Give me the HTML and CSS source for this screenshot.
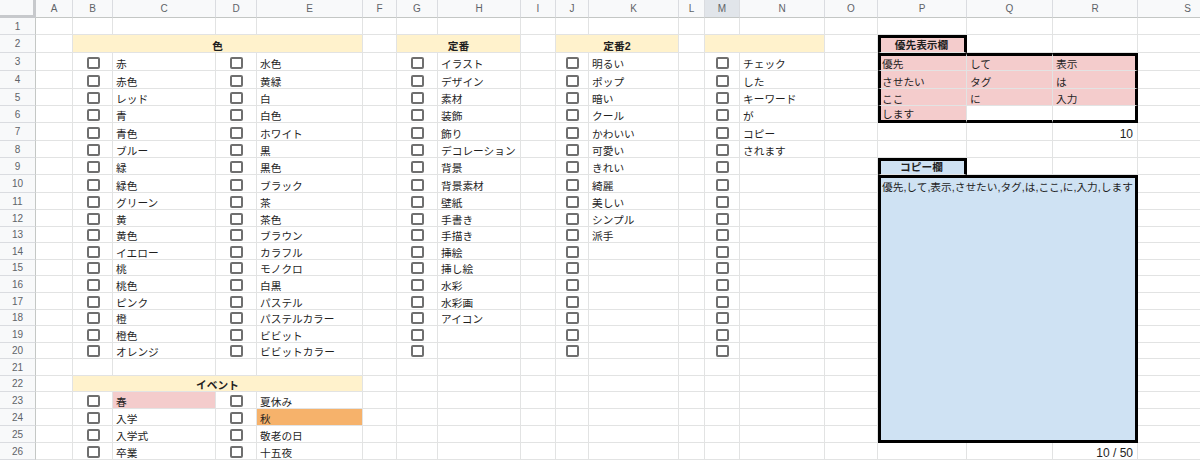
FILE: index.html
```html
<!DOCTYPE html>
<html lang="ja">
<head>
<meta charset="UTF-8">
<meta name="viewport" content="width=device-width, initial-scale=1.0">
<title>タグ選択シート</title>
<link rel="stylesheet" href="styles.css">
</head>
<body>

<div class="sheet" id="sheet"></div>

<script>
const COLS = 'ABCDEFGHIJKLMNOPQRS'.split('');
const cells = {};

function set(ref, opts) {
  const cell = cells[ref] || { cls: '' };
  if (opts.cls) cell.cls += ' ' + opts.cls;
  if (opts.text !== undefined) cell.text = opts.text;
  if (opts.cb) cell.cb = true;
  if (opts.span) cell.span = opts.span;
  cells[ref] = cell;
}

const colors = [['赤','水色'],['赤色','黄緑'],['レッド','白'],['青','白色'],['青色','ホワイト'],['ブルー','黒'],['緑','黒色'],['緑色','ブラック'],['グリーン','茶'],['黄','茶色'],['黄色','ブラウン'],['イエロー','カラフル'],['桃','モノクロ'],['桃色','白黒'],['ピンク','パステル'],['橙','パステルカラー'],['橙色','ビビット'],['オレンジ','ビビットカラー']];
const teiban = ['イラスト','デザイン','素材','装飾','飾り','デコレーション','背景','背景素材','壁紙','手書き','手描き','挿絵','挿し絵','水彩','水彩画','アイコン'];
const teiban2 = ['明るい','ポップ','暗い','クール','かわいい','可愛い','きれい','綺麗','美しい','シンプル','派手'];
const words = ['チェック','した','キーワード','が','コピー','されます'];

for (let r = 3; r <= 20; r++) {
  const i = r - 3;
  set('B' + r, { cb: true }); set('C' + r, { text: colors[i][0] });
  set('D' + r, { cb: true }); set('E' + r, { text: colors[i][1] });
  set('G' + r, { cb: true }); set('H' + r, { text: teiban[i] || '' });
  set('J' + r, { cb: true }); set('K' + r, { text: teiban2[i] || '' });
  set('M' + r, { cb: true }); set('N' + r, { text: words[i] || '' });
}

const events = [['春','夏休み'],['入学','秋'],['入学式','敬老の日'],['卒業','十五夜']];
events.forEach((p, i) => {
  const r = 23 + i;
  set('B' + r, { cb: true }); set('C' + r, { text: p[0] });
  set('D' + r, { cb: true }); set('E' + r, { text: p[1] });
});
set('C23', { cls: 'pink' });
set('E24', { cls: 'orange' });

// 見出し（結合セル）
set('B2', { text: '色', span: [1, 4], cls: 'head' });
set('G2', { text: '定番', span: [1, 2], cls: 'head' });
set('J2', { text: '定番2', span: [1, 2], cls: 'head' });
set('M2', { text: '', span: [1, 2], cls: 'head' });
set('B22', { text: 'イベント', span: [1, 4], cls: 'head' });

// 優先表示欄
const prio = ['優先','して','表示','させたい','タグ','は','ここ','に','入力','します'];
set('P2', { text: '優先表示欄', cls: 'title pink bt bl br' });
prio.forEach((w, i) => {
  set(COLS[15 + i % 3] + (3 + Math.floor(i / 3)), { text: w, cls: 'pink' });
});
['P', 'Q', 'R'].forEach(c => { set(c + '3', { cls: 'bt' }); set(c + '6', { cls: 'bb' }); });
for (let r = 3; r <= 6; r++) { set('P' + r, { cls: 'bl' }); set('R' + r, { cls: 'br' }); }
set('R7', { text: String(prio.length), cls: 'num' });

// コピー欄
set('P9', { text: 'コピー欄', cls: 'title blue bt bl br' });
set('P10', { text: prio.join(','), span: [16, 3], cls: 'blue bt bl br bb top' });
set('R26', { text: prio.length + ' / 50', cls: 'num' });

function buildSheet() {
  const sheet = document.getElementById('sheet');
  const covered = {};
  const add = (cls, text) => {
    const div = document.createElement('div');
    div.className = cls;
    if (text) div.textContent = text;
    sheet.appendChild(div);
    return div;
  };

  add('corner');
  COLS.forEach(c => add('colhead' + (c === 'M' ? ' sel' : ''), c));

  for (let r = 1; r <= 26; r++) {
    add('rowhead', String(r));
    COLS.forEach((c, ci) => {
      const ref = c + r;
      if (covered[ref]) return;
      const cell = cells[ref] || { cls: '' };
      const div = add('cell' + cell.cls + (cell.cb ? ' cbcell' : ''), cell.text);
      if (cell.cb) div.innerHTML = '<span class="cb"></span>';
      if (cell.span) {
        const [rs, cs] = cell.span;
        div.style.gridRow = 'span ' + rs;
        div.style.gridColumn = 'span ' + cs;
        for (let dr = 0; dr < rs; dr++)
          for (let dc = 0; dc < cs; dc++)
            if (dr || dc) covered[COLS[ci + dc] + (r + dr)] = true;
      }
    });
  }
}
buildSheet();
</script>

</body>
</html>
```

FILE: styles.css
```css
html, body { margin: 0; padding: 0; height: 100%; overflow: hidden; background: #fff; }
body { font-family: "Liberation Sans", Arial, "Noto Sans CJK JP", sans-serif; font-size: 10.7px; color: #1f1f1f; }

.sheet {
  display: grid;
  width: max-content;
  grid-template-columns: 36px 37px 40px 103px 41px 106px 34px 41px 83px 35px 33px 90px 26px 35px 85px 53px 89px 86px 85px 100px;
  grid-template-rows: 18px 17px 18px 18px 18px 17px 17px 18px 17px 17px 18px 17px 17px 16px 17px 16px 17px 17px 16px 17px 16px 17px 16px 17px 17px 17px 17px;
}

.corner { background: #f8f9fa; border-right: 3px solid #c7c9cc; border-bottom: 3px solid #c7c9cc; box-sizing: border-box; }
.colhead, .rowhead { background: #f8f9fa; color: #5f6368; font-size: 10px; display: flex; align-items: center; justify-content: center; box-sizing: border-box; }
.colhead { border-right: 1px solid #dadce0; border-bottom: 1px solid #c4c7c5; }
.colhead.sel { background: #e1e5ea; }
.rowhead { border-right: 1px solid #c4c7c5; border-bottom: 1px solid #dadce0; }

.cell { box-sizing: border-box; border-right: 1px solid #e2e3e3; border-bottom: 1px solid #e2e3e3; display: flex; align-items: flex-end; padding: 0 3px; line-height: 12px; white-space: nowrap; overflow: hidden; }
.cbcell { justify-content: center; padding: 0 0 1px 1px; }
.cb { width: 13px; height: 12px; box-sizing: border-box; border: 2px solid #6f6f6f; border-radius: 2px; }

.head { background: #fff2cc; justify-content: center; font-weight: bold; }
.pink { background: #f4cccc; }
.orange { background: #f6b26b; }
.blue { background: #cfe2f3; }
.title { justify-content: center; font-weight: bold; padding-bottom: 1px; }
.num { justify-content: flex-end; font-size: 12px; padding-right: 4px; }
.top { align-items: flex-start; padding: 3px 1px 0; white-space: normal; }

.bt { border-top: 3px solid #000; }
.bl { border-left: 3px solid #000; padding-left: 1px; }
.br { border-right: 3px solid #000; }
.bb { border-bottom: 3px solid #000; }
```
